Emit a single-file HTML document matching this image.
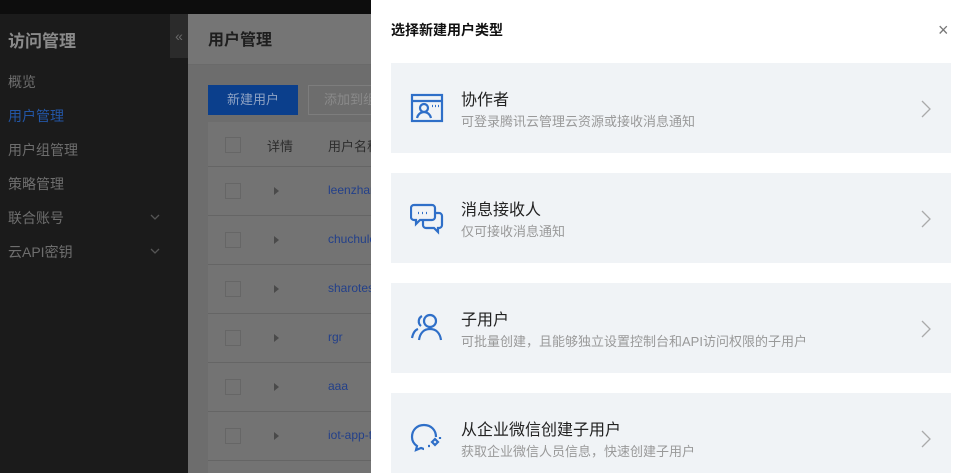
<!DOCTYPE html>
<html><head><meta charset="utf-8"><style>
*{margin:0;padding:0;box-sizing:border-box}
body{width:967px;height:473px;overflow:hidden;position:relative;font-family:"Liberation Sans","Noto Sans CJK SC",sans-serif;background:#6d6d6d}
.abs{position:absolute}
.top{left:0;top:0;width:967px;height:14px;background:#0d0d0d}
.side{left:0;top:14px;width:188px;height:459px;background:#1b1b1b}
.side .t{position:absolute;left:8px;top:13px;font-size:17px;font-weight:bold;color:#8a8a8a}
.side .i{position:absolute;left:8px;font-size:14px;color:#6e6e6e}
.side svg{position:absolute;left:150px}
.col{left:170px;top:14px;width:18px;height:44px;background:#2b2b2b;color:#6a6a6a;font-size:14px;text-align:center;line-height:44px}
.mh{left:188px;top:14px;width:183px;height:51px;background:#757575;border-bottom:1px solid #6a6a6a}
.mh span{position:absolute;left:20px;top:12px;font-size:16px;font-weight:bold;color:#1e1e1e}
.btn{left:208px;top:85px;width:90px;height:30px;background:#0b3f8c;color:#8fa3c4;font-size:13px;text-align:center;line-height:30px}
.btn2{left:308px;top:85px;width:70px;height:30px;border:1px solid #7d7d7d;color:#8a8a8a;font-size:13px;line-height:28px;padding-left:15px;overflow:hidden;white-space:nowrap}
.tbl{left:208px;top:122px;width:163px;height:351px;background:#737373;overflow:hidden}
.row{position:absolute;left:0;width:163px;border-bottom:1px solid #656565}
.cb{position:absolute;left:17px;width:16px;height:16px;border:1px solid #666}
.ar{position:absolute;left:66px;width:0;height:0;border-left:5px solid #4a4a4a;border-top:4px solid transparent;border-bottom:4px solid transparent}
.nm{position:absolute;left:120px;font-size:12px;color:#23408a;white-space:nowrap}
.panel{left:371px;top:0;width:596px;height:473px;background:#fff}
.ttl{left:391px;top:20px;font-size:14px;font-weight:bold;color:#111}
.x{left:938px;top:20px;font-size:18px;color:#777}
.card{left:391px;width:560px;height:90px;background:#f0f3f6}
.card .h{position:absolute;left:70px;top:23px;font-size:16px;color:#222}
.card .s{position:absolute;left:70px;top:48px;font-size:13px;color:#999}
.card svg.ic{position:absolute;left:19px;top:28px}
.card svg.chev{position:absolute;left:529px;top:36px}
</style></head><body>
<div class="abs top"></div>
<div class="abs side">
<div class="t">访问管理</div>
<div class="i" style="top:58px">概览</div>
<div class="i" style="top:92px;color:#2356a6">用户管理</div>
<div class="i" style="top:126px">用户组管理</div>
<div class="i" style="top:160px">策略管理</div>
<div class="i" style="top:194px">联合账号</div><svg style="top:200px" width="10" height="6"><path d="M1 1l4 4 4-4" fill="none" stroke="#555" stroke-width="1.3"/></svg>
<div class="i" style="top:228px">云API密钥</div><svg style="top:234px" width="10" height="6"><path d="M1 1l4 4 4-4" fill="none" stroke="#555" stroke-width="1.3"/></svg>
</div>
<div class="abs col">«</div>
<div class="abs mh"><span>用户管理</span></div>
<div class="abs btn">新建用户</div>
<div class="abs btn2">添加到组</div>
<div class="abs tbl">
<div class="row" style="top:0;height:45px"><div class="cb" style="top:15px"></div><span style="position:absolute;left:59px;top:14px;font-size:13px;color:#2d2d2d">详情</span><span style="position:absolute;left:120px;top:14px;font-size:13px;color:#2d2d2d;white-space:nowrap">用户名称</span></div>
<div class="row" style="top:45px;height:49px"><div class="cb" style="top:16px"></div><div class="ar" style="top:20px"></div><div class="nm" style="top:16px">leenzhang</div></div>
<div class="row" style="top:94px;height:49px"><div class="cb" style="top:16px"></div><div class="ar" style="top:20px"></div><div class="nm" style="top:16px">chuchulee</div></div>
<div class="row" style="top:143px;height:49px"><div class="cb" style="top:16px"></div><div class="ar" style="top:20px"></div><div class="nm" style="top:16px">sharotest</div></div>
<div class="row" style="top:192px;height:49px"><div class="cb" style="top:16px"></div><div class="ar" style="top:20px"></div><div class="nm" style="top:16px">rgr</div></div>
<div class="row" style="top:241px;height:49px"><div class="cb" style="top:16px"></div><div class="ar" style="top:20px"></div><div class="nm" style="top:16px">aaa</div></div>
<div class="row" style="top:290px;height:49px"><div class="cb" style="top:16px"></div><div class="ar" style="top:20px"></div><div class="nm" style="top:16px">iot-app-test</div></div>
</div>
<div class="abs panel"></div>
<div class="abs ttl">选择新建用户类型</div>
<div class="abs x">×</div>

<div class="abs card" style="top:63px">
<svg class="ic" width="34" height="34" viewBox="0 0 34 34" fill="none" stroke="#2f6fc8" stroke-width="2.2"><rect x="2" y="4" width="30" height="26"/><line x1="2" y1="10" x2="32" y2="10"/><circle cx="14" cy="17" r="4"/><path d="M7 27c1-4 4-6 7-6s6 2 7 6"/><path d="M22 15h1M25 15h1M28 15h1"/></svg>
<div class="h">协作者</div><div class="s">可登录腾讯云管理云资源或接收消息通知</div>
<svg class="chev" width="12" height="20"><path d="M2 2l8 8-8 8" fill="none" stroke="#aaa" stroke-width="1.3"/></svg></div>

<div class="abs card" style="top:173px">
<svg class="ic" width="34" height="34" viewBox="0 0 34 34" fill="none" stroke="#2f6fc8" stroke-width="2.2"><path d="M4 4h18a3 3 0 0 1 3 3v9a3 3 0 0 1-3 3H10l-4 4v-4H4a3 3 0 0 1-3-3V7a3 3 0 0 1 3-3z"/><path d="M25 12h4a3 3 0 0 1 3 3v9a3 3 0 0 1-3 3h-1v4l-4-4h-8a3 3 0 0 1-3-3v-5"/><path d="M8 12h1M12 12h1M16 12h1"/></svg>
<div class="h">消息接收人</div><div class="s">仅可接收消息通知</div>
<svg class="chev" width="12" height="20"><path d="M2 2l8 8-8 8" fill="none" stroke="#aaa" stroke-width="1.3"/></svg></div>

<div class="abs card" style="top:283px">
<svg class="ic" width="34" height="34" viewBox="0 0 34 34" fill="none" stroke="#2f6fc8" stroke-width="2.2"><circle cx="20" cy="10" r="6"/><path d="M9 29c1-7 5-11 11-11s10 4 11 11"/><path d="M12 5a6 6 0 0 0-1 10"/><path d="M2 27c1-5 3-8 6-9"/></svg>
<div class="h">子用户</div><div class="s">可批量创建，且能够独立设置控制台和API访问权限的子用户</div>
<svg class="chev" width="12" height="20"><path d="M2 2l8 8-8 8" fill="none" stroke="#aaa" stroke-width="1.3"/></svg></div>

<div class="abs card" style="top:393px;height:80px">
<svg class="ic" width="34" height="34" viewBox="0 0 34 34" fill="none" stroke="#2f6fc8" stroke-width="2.2"><path d="M26 16c0-7-5-12-12-12S2 9 2 16c0 4 2 7 5 9l-1 4 5-2c1 0 2 1 3 1"/><path d="M22 21l3-3 3 3-3 3zM18 25h2M30 18v-2"/></svg>
<div class="h">从企业微信创建子用户</div><div class="s">获取企业微信人员信息，快速创建子用户</div>
<svg class="chev" width="12" height="20"><path d="M2 2l8 8-8 8" fill="none" stroke="#aaa" stroke-width="1.3"/></svg></div>
</body></html>
